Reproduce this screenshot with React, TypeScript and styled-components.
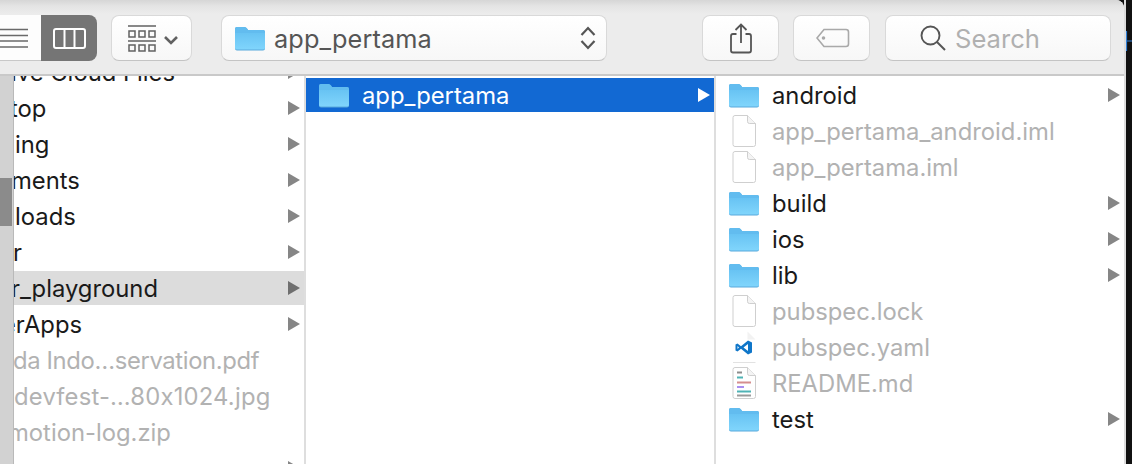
import React from "react";
import styled, { createGlobalStyle } from "styled-components";

const Global = createGlobalStyle`
  html, body { margin: 0; padding: 0; background: #111; overflow: hidden; }
  body { font-family: Inter, "Liberation Sans", sans-serif; font-feature-settings: "calt" 0; }
`;

const Screen = styled.div`
  display: flex;
  width: 1132px;
  height: 464px;
  overflow: hidden;
  background: #111;
`;
const Finder = styled.div`
  width: 1124px;
  height: 464px;
  display: flex;
  flex-direction: column;
  border-top-right-radius: 8px;
  overflow: hidden;
  background: #fff;
`;
const EdgeLine = styled.div`
  width: 2px;
  background: #dcdcdc;
`;
const Backdrop = styled.div`
  flex: 1;
  padding-top: 31px;
  line-height: 0;
`;
const Toolbar = styled.div`
  height: 74px;
  flex: none;
  display: flex;
  align-items: flex-start;
  padding-top: 15px;
  box-sizing: border-box;
  background: linear-gradient(#d6d6d6 0, #e4e4e4 6px, #ececec 14px, #ececec 100%);
`;
const ToolbarRule = styled.div`
  height: 2px;
  flex: none;
  background: #c9c9c9;
`;
const ViewSwitch = styled.div`
  display: flex;
  width: 97px;
  height: 46px;
`;
const ListSegment = styled.div`
  width: 41px;
  height: 46px;
  background: #fdfdfd;
  border-bottom: 1px solid #c8c8c8;
  box-sizing: border-box;
  display: flex;
  align-items: center;
`;
const ColumnSegment = styled.div`
  width: 56px;
  height: 46px;
  background: #757575;
  border-radius: 0 8px 8px 0;
  display: flex;
  align-items: center;
  justify-content: center;
`;
const ToolButton = styled.div<{ $gap: number; $w: number; $nudge?: number }>`
  margin-left: ${(p) => p.$gap}px;
  width: ${(p) => p.$w}px;
  height: 46px;
  box-sizing: border-box;
  border: 1px solid #d9d9d9;
  border-bottom-color: #c4c4c4;
  border-radius: 8px;
  background: linear-gradient(#ffffff, #f7f7f7);
  display: flex;
  align-items: center;
  justify-content: center;
  padding-left: ${(p) => p.$nudge ?? 0}px;
`;
const PathButton = styled(ToolButton)`
  justify-content: flex-start;
  padding: 0 10px 0 12px;
`;
const PathLabel = styled.span`
  margin-left: 8px;
  font-size: 25.3px;
  color: #555;
  flex: 1;
  letter-spacing: 0.1px;
`;
const SearchButton = styled(ToolButton)`
  justify-content: flex-start;
  padding-left: 34px;
`;
const SearchLabel = styled.span`
  margin-left: 9px;
  font-size: 25.6px;
  color: #b0b0b0;
`;
const Browser = styled.div`
  flex: 1;
  display: flex;
  min-height: 0;
`;
const ScrollTrack = styled.div`
  width: 13px;
  flex: none;
  background: #d2d2d2;
  border-right: 1px solid #b9b9b9;
  position: relative;
`;
const ScrollThumb = styled.div`
  position: absolute;
  left: 0;
  top: 102px;
  width: 12px;
  height: 48px;
  background: #8b8b8b;
`;
const Column = styled.div<{ $w: number; $top: number }>`
  width: ${(p) => p.$w}px;
  flex: none;
  overflow: hidden;
  display: flex;
  flex-direction: column;
  gap: 2px;
  padding-top: ${(p) => Math.max(p.$top, 0)}px;
  & > :first-child {
    margin-top: ${(p) => Math.min(p.$top, 0)}px;
  }
`;
const ColumnRule = styled.div`
  width: 2px;
  flex: none;
  background: #dedede;
`;
const Row = styled.div<{ $state?: "active" | "path" }>`
  height: 34px;
  flex: none;
  display: flex;
  align-items: center;
  padding: 0 4px 0 12px;
  background: ${(p) => p.$state === "active" ? "#1269d3" : p.$state === "path" ? "#dcdcdc" : "transparent"};
`;
const ClippedRow = styled(Row)`
  padding-left: 0;
`;
const IconSlot = styled.div`
  width: 32px;
  height: 32px;
  flex: none;
  display: flex;
  align-items: center;
  justify-content: center;
  margin-right: 12px;
`;
const Name = styled.span<{ $dim?: boolean; $active?: boolean; $shift?: number; $track?: number }>`
  flex: 1;
  font-size: 23.8px;
  white-space: pre;
  margin-left: ${(p) => p.$shift ?? 0}px;
  letter-spacing: ${(p) => p.$track ?? 0}px;
  color: ${(p) => (p.$active ? "#fff" : p.$dim ? "#b2b2b2" : "#1a1a1a")};
`;

const Arrow = ({ white, dark }: { white?: boolean; dark?: boolean }) => (
  <svg width="12" height="14" viewBox="0 0 12 14">
    <path d="M0 0 L12 7 L0 14 Z" fill={white ? "#fff" : dark ? "#6f6f6f" : "#868686"} />
  </svg>
);

const Folder = () => (
  <svg width="32" height="25" viewBox="0 0 32 25">
    <defs>
      <linearGradient id="fg" x1="0" y1="0" x2="0" y2="1">
        <stop offset="0" stopColor="#68c3f3" />
        <stop offset="1" stopColor="#80d5fc" />
      </linearGradient>
    </defs>
    <path d="M1 3 Q1 1 3 1 H10.5 Q12 1 13 2.5 L14 4 H29 Q31 4 31 6 V22.5 Q31 24.5 29 24.5 H3 Q1 24.5 1 22.5 Z" fill="#59a9dc" />
    <path d="M1 3 Q1 1 3 1 H10.5 Q12 1 13 2.5 L14 4 H29 Q31 4 31 6 V8 H1 Z" fill="#62bcef" />
    <path d="M1 7 H31 V22 Q31 23.5 29 23.5 H3 Q1 23.5 1 22 Z" fill="url(#fg)" />
  </svg>
);

const DocShape = () => (
  <>
    <path d="M1 2.5 Q1 .5 3 .5 H15.5 L23.5 8.5 V29.5 Q23.5 31.5 21.5 31.5 H3 Q1 31.5 1 29.5 Z" fill="#fff" stroke="#cfcfcf" />
    <path d="M15.5 .5 V6.5 Q15.5 8.5 17.5 8.5 H23.5" fill="#f4f4f4" stroke="#cfcfcf" />
  </>
);
const Doc = () => (
  <svg width="25" height="32" viewBox="0 0 25 32"><DocShape /></svg>
);
const CodeDoc = () => (
  <svg width="25" height="32" viewBox="0 0 25 32">
    <path d="M1 2.5 Q1 .5 3 .5 H15.5 L23.5 8.5 V31.5 H1 Z" fill="#fff" />
    <path d="M1 31.5 H23.5" stroke="#e2e2e2" />
    <path d="M15.5 .5 L23.5 8.5 H15.5 Z" fill="#f2f2f2" />
    <path d="M16 9.5 L20 11.5 V21.5 L16 23.5 L9 17.8 L5.5 20.5 L3.5 19.5 V13.5 L5.5 12.5 L9 15.2 Z M16 13 L11.5 16.5 L16 20 Z M5.5 15 V18 L7 16.5 Z" fill="#0f76c9" fillRule="evenodd" />
  </svg>
);
const ReadmeDoc = () => (
  <svg width="25" height="32" viewBox="0 0 25 32">
    <DocShape />
    <g strokeWidth="2">
      <path d="M5 5.5 H10" stroke="#8d8d8d" />
      <path d="M5 10.5 H11" stroke="#4fb3b5" />
      <path d="M5 15.5 H19" stroke="#d58e8e" />
      <path d="M5 20 H12" stroke="#a98ef0" />
      <path d="M5 24.5 H19" stroke="#4fb3b5" />
      <path d="M5 28.5 H19" stroke="#9a9a9a" />
    </g>
  </svg>
);
const ListGlyph = () => (
  <svg width="28" height="22" viewBox="0 0 28 22" fill="none" stroke="#6a6a6a" strokeWidth="1.6">
    <path d="M0 2.5 H28 M0 8.5 H28 M0 14 H28 M0 20 H28" />
  </svg>
);
const ColumnGlyph = () => (
  <svg width="33" height="21" viewBox="0 0 33 21" fill="none" stroke="#fff" strokeWidth="2">
    <rect x="1" y="1" width="31" height="19" rx="2" />
    <path d="M11.5 1 V20 M21.5 1 V20" />
  </svg>
);
const ArrangeGlyph = () => (
  <svg width="50" height="27" viewBox="0 0 50 27" fill="none" stroke="#616161">
    <path d="M0 1 H28 M0 16 H28" strokeWidth="1.6" />
    <g strokeWidth="1.5">
      <rect x="1" y="6" width="6" height="6" />
      <rect x="11" y="6" width="6" height="6" />
      <rect x="21" y="6" width="6" height="6" />
      <rect x="1" y="20" width="6" height="6" />
      <rect x="11" y="20" width="6" height="6" />
      <rect x="21" y="20" width="6" height="6" />
    </g>
    <path d="M37 12 L43 18 L49 12" strokeWidth="2.6" />
  </svg>
);
const UpDown = () => (
  <svg width="16" height="24" viewBox="0 0 16 24" fill="none" stroke="#555" strokeWidth="2.2">
    <path d="M1.5 9 L8 2 L14.5 9 M1.5 15 L8 22 L14.5 15" />
  </svg>
);
const ShareGlyph = () => (
  <svg width="22" height="31" viewBox="0 0 22 31" fill="none" stroke="#555" strokeWidth="1.8">
    <path d="M6.5 11 H3 Q1 11 1 13 V27.5 Q1 29.5 3 29.5 H19 Q21 29.5 21 27.5 V13 Q21 11 19 11 H15.5" />
    <path d="M11 20 V1.5 M5.5 7 L11 1.5 L16.5 7" />
  </svg>
);
const TagGlyph = () => (
  <svg width="34" height="20" viewBox="0 0 34 20" fill="none" stroke="#a9a9a9" strokeWidth="1.6">
    <path d="M8 1.5 H30 Q32.5 1.5 32.5 4 V16 Q32.5 18.5 30 18.5 H8 L1 10 Z" />
    <circle cx="7.5" cy="10" r="1" fill="#a9a9a9" />
  </svg>
);
const SearchGlyph = () => (
  <svg width="26" height="26" viewBox="0 0 26 26" fill="none" stroke="#555" strokeWidth="1.9">
    <circle cx="10.5" cy="10.5" r="9" />
    <path d="M17 17 L25 25" />
  </svg>
);

const leftRows: { t: string; s?: number; track?: number; arrow?: boolean; dim?: boolean; path?: boolean }[] = [
  { t: "ive Cloud Files", s: -3, arrow: true },
  { t: "top", s: -4, arrow: true },
  { t: "ing", s: 1, arrow: true },
  { t: "ments", s: -3, arrow: true },
  { t: "loads", s: 1, arrow: true },
  { t: "r", s: -1, arrow: true },
  { t: "r_playground", s: -3, arrow: true, path: true },
  { t: "erApps", s: -12, arrow: true },
  { t: "da Indo…servation.pdf", s: -1, track: -0.35, dim: true },
  { t: "devfest-…80x1024.jpg", s: 0, track: 0.2, dim: true },
  { t: "motion-log.zip", s: -6, dim: true },
  { t: "", arrow: true },
];

const rightRows: { t: string; icon: React.ReactNode; dim?: boolean }[] = [
  { t: "android", icon: <Folder /> },
  { t: "app_pertama_android.iml", icon: <Doc />, dim: true },
  { t: "app_pertama.iml", icon: <Doc />, dim: true },
  { t: "build", icon: <Folder /> },
  { t: "ios", icon: <Folder /> },
  { t: "lib", icon: <Folder /> },
  { t: "pubspec.lock", icon: <Doc />, dim: true },
  { t: "pubspec.yaml", icon: <CodeDoc />, dim: true },
  { t: "README.md", icon: <ReadmeDoc />, dim: true },
  { t: "test", icon: <Folder /> },
];

export default function App() {
  return (
    <Screen>
      <Global />
      <Finder>
        <Toolbar>
          <ViewSwitch>
            <ListSegment><ListGlyph /></ListSegment>
            <ColumnSegment><ColumnGlyph /></ColumnSegment>
          </ViewSwitch>
          <ToolButton $gap={14} $w={81} $nudge={3}><ArrangeGlyph /></ToolButton>
          <PathButton $gap={29} $w={386}>
            <Folder />
            <PathLabel>app_pertama</PathLabel>
            <UpDown />
          </PathButton>
          <ToolButton $gap={95} $w={77}><ShareGlyph /></ToolButton>
          <ToolButton $gap={14} $w={77} $nudge={3}><TagGlyph /></ToolButton>
          <SearchButton $gap={15} $w={226}>
            <SearchGlyph />
            <SearchLabel>Search</SearchLabel>
          </SearchButton>
        </Toolbar>
        <ToolbarRule />
        <Browser>
          <ScrollTrack><ScrollThumb /></ScrollTrack>
          <Column $w={290} $top={-21}>
            {leftRows.map((r, i) => (
              <ClippedRow key={i} $state={r.path ? "path" : undefined}>
                <Name $dim={r.dim} $shift={r.s} $track={r.track}>{r.t}</Name>
                {r.arrow && <Arrow dark={r.path} />}
              </ClippedRow>
            ))}
          </Column>
          <ColumnRule />
          <Column $w={408} $top={2}>
            <Row $state="active">
              <IconSlot><Folder /></IconSlot>
              <Name $active>app_pertama</Name>
              <Arrow white />
            </Row>
          </Column>
          <ColumnRule />
          <Column $w={408} $top={2}>
            {rightRows.map((r) => (
              <Row key={r.t}>
                <IconSlot>{r.icon}</IconSlot>
                <Name $dim={r.dim}>{r.t}</Name>
                {!r.dim && <Arrow />}
              </Row>
            ))}
          </Column>
        </Browser>
      </Finder>
      <EdgeLine />
      <Backdrop>
        <svg width="6" height="20" viewBox="0 0 6 20">
          <path d="M.5 0 V20 M0 10 H6" stroke="#2f7fd6" strokeWidth="1.2" />
        </svg>
      </Backdrop>
    </Screen>
  );
}
